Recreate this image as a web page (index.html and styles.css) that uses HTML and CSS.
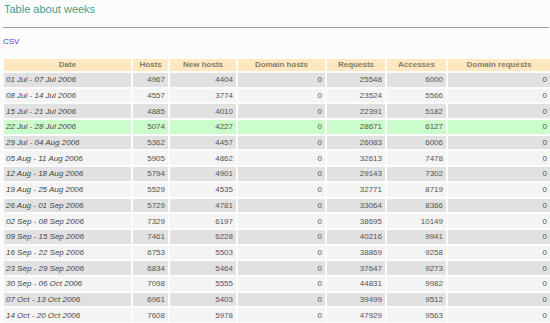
FILE: index.html
```html
<!DOCTYPE html>
<html>
<head>
<meta charset="utf-8">
<link rel="stylesheet" href="styles.css">
</head>
<body>
<div class="page">
  <h1 class="title">Table about weeks</h1>
  <hr class="rule">
  <a class="csv" href="#">CSV</a>
  <table class="weeks">
    <thead>
      <tr><th class="c-date">Date</th><th class="c-hosts">Hosts</th><th class="c-new">New hosts</th><th class="c-dhosts">Domain hosts</th><th class="c-req">Requests</th><th class="c-acc">Accesses</th><th class="c-dreq">Domain requests</th></tr>
    </thead>
    <tbody>
      <tr><td class="d">01 Jul - 07 Jul 2006</td><td>4967</td><td>4404</td><td>0</td><td>25548</td><td>6000</td><td>0</td></tr>
      <tr><td class="d">08 Jul - 14 Jul 2006</td><td>4557</td><td>3774</td><td>0</td><td>23524</td><td>5566</td><td>0</td></tr>
      <tr><td class="d">15 Jul - 21 Jul 2006</td><td>4885</td><td>4010</td><td>0</td><td>22391</td><td>5182</td><td>0</td></tr>
      <tr class="hl"><td class="d">22 Jul - 28 Jul 2006</td><td>5074</td><td>4227</td><td>0</td><td>28671</td><td>6127</td><td>0</td></tr>
      <tr><td class="d">29 Jul - 04 Aug 2006</td><td>5362</td><td>4457</td><td>0</td><td>26083</td><td>6006</td><td>0</td></tr>
      <tr><td class="d">05 Aug - 11 Aug 2006</td><td>5905</td><td>4862</td><td>0</td><td>32613</td><td>7478</td><td>0</td></tr>
      <tr><td class="d">12 Aug - 18 Aug 2006</td><td>5794</td><td>4901</td><td>0</td><td>29143</td><td>7302</td><td>0</td></tr>
      <tr><td class="d">19 Aug - 25 Aug 2006</td><td>5529</td><td>4535</td><td>0</td><td>32771</td><td>8719</td><td>0</td></tr>
      <tr><td class="d">26 Aug - 01 Sep 2006</td><td>5729</td><td>4781</td><td>0</td><td>33064</td><td>8366</td><td>0</td></tr>
      <tr><td class="d">02 Sep - 08 Sep 2006</td><td>7329</td><td>6197</td><td>0</td><td>38695</td><td>10149</td><td>0</td></tr>
      <tr><td class="d">09 Sep - 15 Sep 2006</td><td>7461</td><td>6228</td><td>0</td><td>40216</td><td>9941</td><td>0</td></tr>
      <tr><td class="d">16 Sep - 22 Sep 2006</td><td>6753</td><td>5503</td><td>0</td><td>38869</td><td>9258</td><td>0</td></tr>
      <tr><td class="d">23 Sep - 29 Sep 2006</td><td>6834</td><td>5464</td><td>0</td><td>37647</td><td>9273</td><td>0</td></tr>
      <tr><td class="d">30 Sep - 06 Oct 2006</td><td>7098</td><td>5555</td><td>0</td><td>44831</td><td>9982</td><td>0</td></tr>
      <tr><td class="d">07 Oct - 13 Oct 2006</td><td>6961</td><td>5403</td><td>0</td><td>39499</td><td>9512</td><td>0</td></tr>
      <tr><td class="d">14 Oct - 20 Oct 2006</td><td>7608</td><td>5978</td><td>0</td><td>47929</td><td>9563</td><td>0</td></tr>
    </tbody>
  </table>
</div>
</body>
</html>
```
FILE: styles.css
```css
html, body {
  margin: 0;
  padding: 0;
  background: #fcfcfc;
}
.page {
  font-family: "Liberation Sans", Arial, sans-serif;
  padding: 0 0 0 2px;
}
.title {
  margin: 0;
  padding: 3px 0 0 2px;
  font-size: 11px;
  line-height: 13px;
  font-weight: normal;
  color: #3e9f9b;
}
.rule {
  margin: 11px 1px 0 1px;
  border: 0;
  border-top: 1px solid #9e9e9e;
  height: 0;
}
.csv {
  display: block;
  margin: 9px 0 0 1px;
  font-size: 8px;
  line-height: 10px;
  color: #4f3fd6;
  text-decoration: none;
}
.weeks {
  margin-top: 10px;
  border-spacing: 2px 2px;
  table-layout: fixed;
  width: 550px;
  font-size: 8px;
}
.c-date { width: 127px; }
.c-hosts { width: 35px; }
.c-new { width: 66px; }
.c-dhosts { width: 87px; }
.c-req { width: 58px; }
.c-acc { width: 59px; }
.c-dreq { width: 102px; }
.weeks th {
  box-sizing: border-box;
  background: #fde8bf;
  color: #857c6c;
  font-weight: bold;
  height: 12px;
  padding: 0;
  line-height: 12px;
  text-align: center;
  white-space: nowrap;
}
.weeks td {
  height: 13.7px;
  padding: 0 3px 0 2px;
  line-height: 13px;
  text-align: right;
  color: #555;
  white-space: nowrap;
  overflow: hidden;
}
.weeks td.d {
  text-align: left;
  font-style: italic;
  color: #444;
}
.weeks tbody tr:nth-child(odd) td { background: #e1e1e1; }
.weeks tbody tr:nth-child(even) td { background: #f4f4f4; }
.weeks tbody tr.hl td { background: #cbfccb; }
```
